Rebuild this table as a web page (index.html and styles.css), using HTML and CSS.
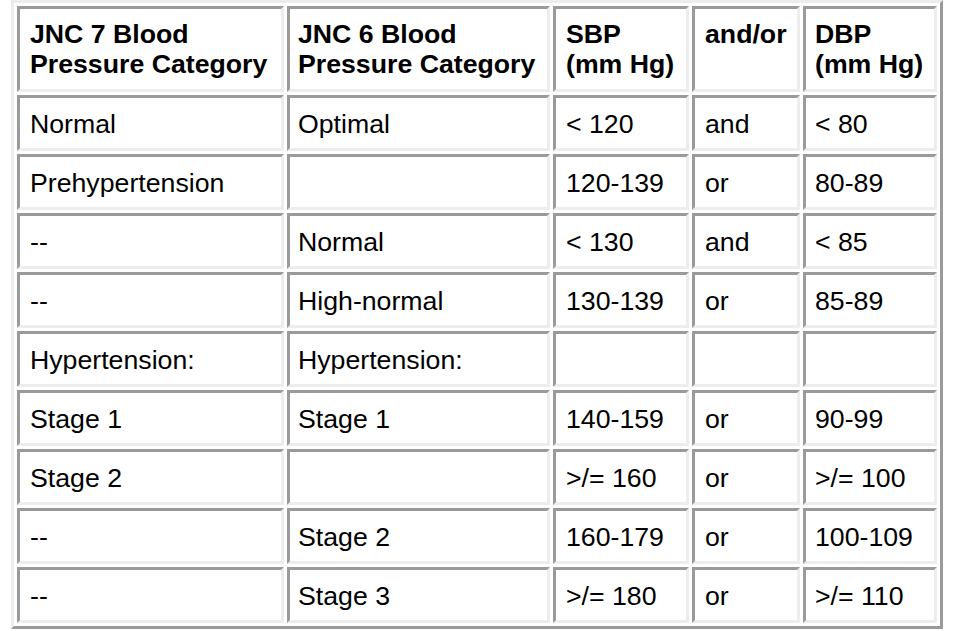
FILE: index.html
```html
<!DOCTYPE html>
<html>
<head>
<meta charset="utf-8">
<link rel="stylesheet" href="styles.css">
</head>
<body>
<table class="bp">
  <tr class="head">
    <th class="c1">JNC 7 Blood<br>Pressure Category</th>
    <th class="c2">JNC 6 Blood<br>Pressure Category</th>
    <th class="c3">SBP<br>(mm Hg)</th>
    <th class="c4">and/or</th>
    <th class="c5">DBP<br>(mm Hg)</th>
  </tr>
  <tr><td>Normal</td><td>Optimal</td><td>&lt; 120</td><td>and</td><td>&lt; 80</td></tr>
  <tr><td>Prehypertension</td><td></td><td>120-139</td><td>or</td><td>80-89</td></tr>
  <tr><td>--</td><td>Normal</td><td>&lt; 130</td><td>and</td><td>&lt; 85</td></tr>
  <tr><td>--</td><td>High-normal</td><td>130-139</td><td>or</td><td>85-89</td></tr>
  <tr><td>Hypertension:</td><td>Hypertension:</td><td></td><td></td><td></td></tr>
  <tr><td>Stage 1</td><td>Stage 1</td><td>140-159</td><td>or</td><td>90-99</td></tr>
  <tr><td>Stage 2</td><td></td><td>&gt;/= 160</td><td>or</td><td>&gt;/= 100</td></tr>
  <tr><td>--</td><td>Stage 2</td><td>160-179</td><td>or</td><td>100-109</td></tr>
  <tr><td>--</td><td>Stage 3</td><td>&gt;/= 180</td><td>or</td><td>&gt;/= 110</td></tr>
</table>
</body>
</html>
```
FILE: styles.css
```css
html, body {
  margin: 0;
  padding: 0;
  background: #ffffff;
}

body {
  padding-left: 11px;
  font-family: "Liberation Sans", Arial, sans-serif;
  color: #000000;
}

.bp {
  border-collapse: separate;
  border-spacing: 3px;
  border-style: solid;
  border-width: 3px;
  border-color: #ededed #9a9a9a #9a9a9a #ededed;
  background: #ffffff;
  table-layout: fixed;
  width: 932px;
}

.bp th,
.bp td {
  box-sizing: border-box;
  border-style: solid;
  border-width: 3px;
  border-color: #9a9a9a #ededed #ededed #9a9a9a;
  padding: 11px 10px 9px 10px;
  font-size: 26.7px;
  line-height: 30px;
  text-align: left;
  vertical-align: middle;
  white-space: nowrap;
  height: 56px;
}

.bp th {
  font-weight: bold;
  vertical-align: top;
  height: 86px;
  padding-top: 10px;
  padding-bottom: 10px;
}

.bp .c1 { width: 267px; }
.bp .c2 { width: 263px; padding-left: 8px; }
.bp .c3 { width: 136px; }
.bp .c4 { width: 108px; }
.bp .c5 { width: 134px; padding-left: 9px; }

.bp td:nth-child(2) { padding-left: 8px; }
.bp td:nth-child(5) { padding-left: 9px; }
```
